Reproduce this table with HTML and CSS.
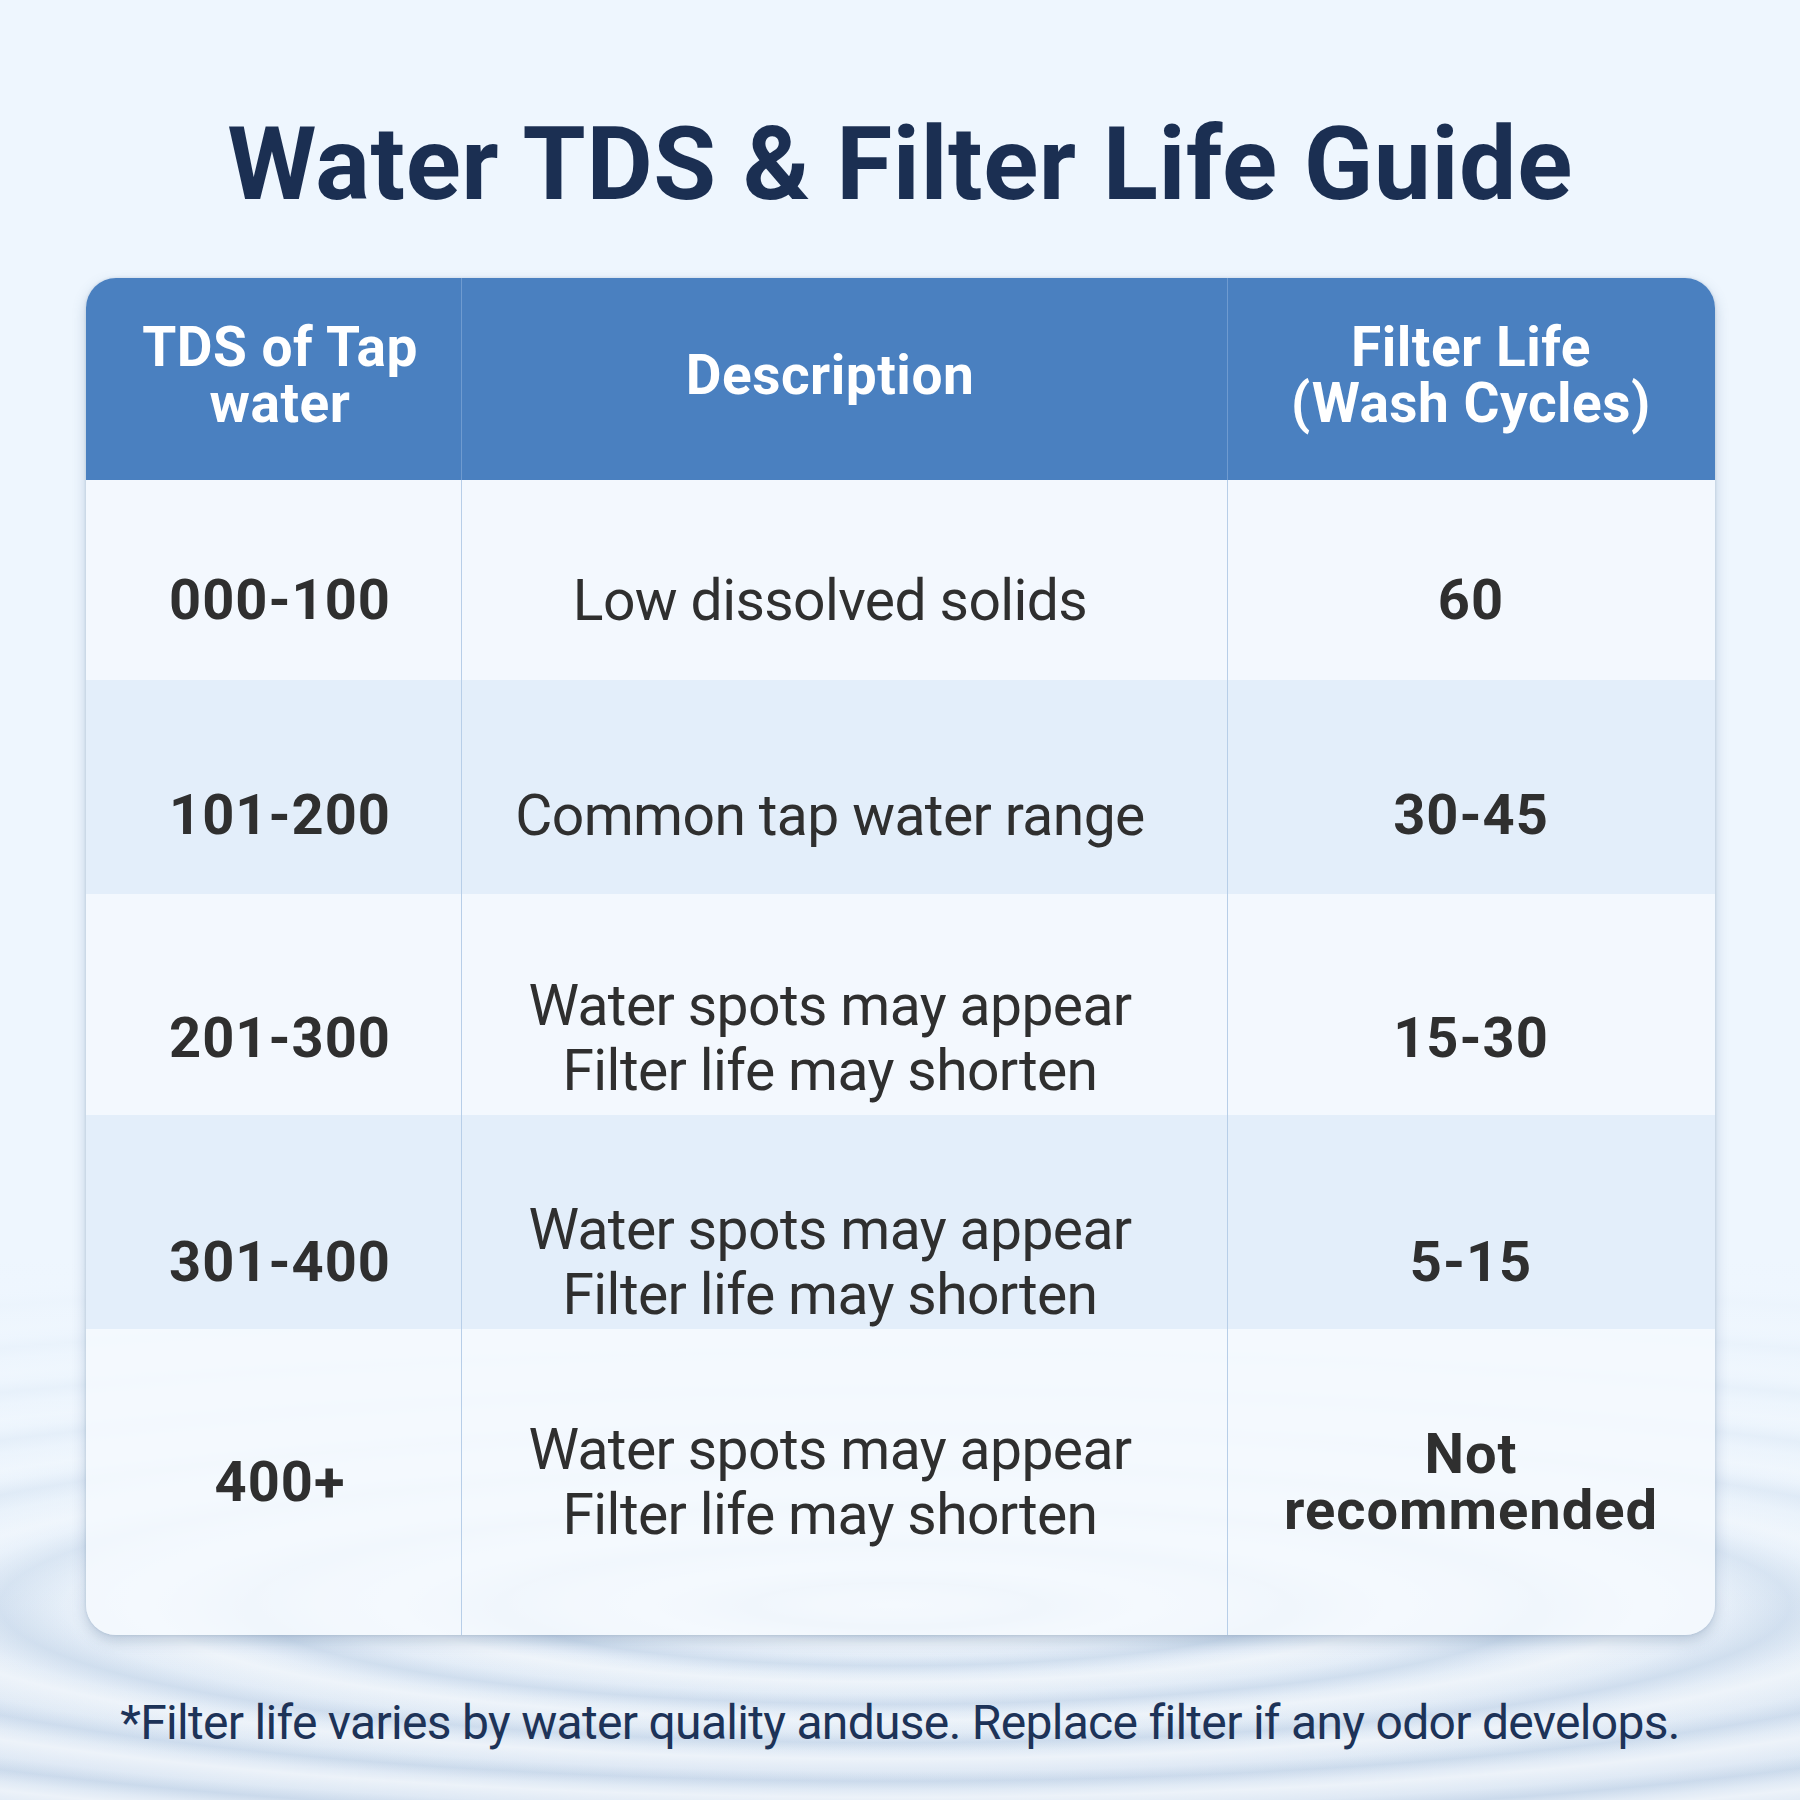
FILE: index.html
```html
<!DOCTYPE html>
<html lang="en">
<head>
<meta charset="utf-8">
<title>Water TDS &amp; Filter Life Guide</title>
<link rel="stylesheet" href="styles.css">
</head>
<body>
<main class="page">
  <h1 class="title">Water TDS &amp; Filter Life Guide</h1>
  <section class="table">
    <div class="row head">
      <div class="cell c1">TDS of Tap<br>water</div>
      <div class="cell c2">Description</div>
      <div class="cell c3">Filter Life<br>(Wash Cycles)</div>
    </div>
    <div class="row r1 light">
      <div class="cell c1 num">000-100</div>
      <div class="cell c2 desc">Low dissolved solids</div>
      <div class="cell c3 num">60</div>
    </div>
    <div class="row r2 dark">
      <div class="cell c1 num">101-200</div>
      <div class="cell c2 desc">Common tap water range</div>
      <div class="cell c3 num">30-45</div>
    </div>
    <div class="row r3 light">
      <div class="cell c1 num">201-300</div>
      <div class="cell c2 desc">Water spots may appear<br>Filter life may shorten</div>
      <div class="cell c3 num">15-30</div>
    </div>
    <div class="row r4 dark">
      <div class="cell c1 num">301-400</div>
      <div class="cell c2 desc">Water spots may appear<br>Filter life may shorten</div>
      <div class="cell c3 num">5-15</div>
    </div>
    <div class="row r5 last">
      <div class="cell c1 num">400+</div>
      <div class="cell c2 desc">Water spots may appear<br>Filter life may shorten</div>
      <div class="cell c3 num">Not<br>recommended</div>
    </div>
  </section>
  <p class="note">*Filter life varies by water quality anduse. Replace filter if any odor develops.</p>
</main>
</body>
</html>
```
FILE: styles.css
```css
html, body {
  margin: 0;
  padding: 0;
}
body {
  width: 1800px;
  height: 1800px;
  overflow: hidden;
  font-family: Roboto, "Liberation Sans", sans-serif;
  background-color: #eef6fe;
  background-image:
    linear-gradient(to bottom, #eef6fe 0, #eef6fe 1260px, rgba(238,246,254,0.65) 1440px, rgba(238,246,254,0.1) 1620px, rgba(238,246,254,0) 1800px),
    repeating-radial-gradient(ellipse 1300px 200px at 895px 1605px,
      rgba(255,255,255,0.5) 0px,
      rgba(255,255,255,0.15) 80px,
      rgba(160,185,214,0.26) 145px,
      rgba(255,255,255,0.2) 205px,
      rgba(255,255,255,0.5) 250px),
    linear-gradient(to bottom, #eef6fe 0, #e6f0fa 1400px, #d9e5f3 1800px);
}
.page {
  display: flex;
  flex-direction: column;
  align-items: center;
}
.title {
  margin: 113px 0 0;
  height: 102px;
  font-size: 102px;
  line-height: 1;
  font-weight: 700;
  color: #1b2f52;
  letter-spacing: 0.6px;
  white-space: nowrap;
}
.table {
  margin-top: 63px;
  width: 1629px;
  border-radius: 30px;
  overflow: hidden;
  box-shadow: 0 6px 14px rgba(70, 100, 140, 0.28), 0 0 3px rgba(70, 100, 140, 0.2);
}
.row {
  display: grid;
  grid-template-columns: 375px 766px 1fr;
}
.cell {
  display: flex;
  align-items: center;
  justify-content: center;
  text-align: center;
  box-sizing: border-box;
}
.cell.c1 { padding-left: 14px; }
.cell.c2 { padding-right: 28px; border-left: 1px solid #b7cee8; }
.cell.c3 { border-left: 1px solid #b7cee8; }

.head {
  height: 202px;
  background: #4a80c0;
  color: #ffffff;
  font-weight: 700;
  font-size: 55px;
  line-height: 56px;
  letter-spacing: 0.5px;
}
.head .cell { padding-bottom: 8px; }
.head .cell.c2, .head .cell.c3 { border-left-color: #6f9bd0; }

.num {
  font-weight: 700;
  font-size: 56px;
  line-height: 56px;
  color: #2f2f2f;
  letter-spacing: 1px;
}
.desc {
  font-weight: 400;
  font-size: 57px;
  line-height: 65px;
  color: #2f2f2f;
  letter-spacing: -0.6px;
}
.light { background: #f3f8fe; }
.dark { background: #e3eefa; }
.last { background: rgba(245, 249, 254, 0.86); }

.r1 { height: 200px; }
.r1 .cell { padding-top: 40px; }
.r2 { height: 214px; }
.r2 .cell { padding-top: 56px; }
.r3 { height: 221px; }
.r3 .cell { padding-top: 66px; }
.r4 { height: 214px; }
.r4 .cell { padding-top: 80px; }
.r5 { height: 306px; }

.note {
  margin: 64px 0 0;
  font-size: 48px;
  line-height: 1;
  color: #1d3358;
  letter-spacing: -0.7px;
  white-space: nowrap;
}
```
